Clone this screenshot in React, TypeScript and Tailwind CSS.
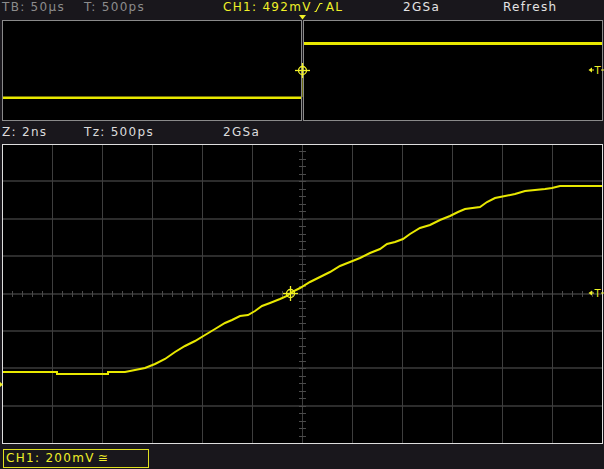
import React from "react";

const YELLOW = "#f0f028";
const TRACE = "#e8e800";

// Trace of CH1 in screen coordinates (x, y)
const wave: [number, number][] = [
  [3, 372], [57, 372], [57, 374], [108, 374], [108, 372], [125, 372], [135, 370],
  [145, 368], [155, 364], [165, 359], [175, 352], [185, 346], [195, 341], [205, 335],
  [215, 329], [225, 323], [232, 320], [240, 316], [248, 315], [255, 311], [262, 306],
  [270, 303], [280, 299], [287, 296], [292, 292], [300, 288], [310, 282], [320, 277],
  [330, 272], [340, 266], [350, 262], [360, 258], [370, 253], [380, 249], [387, 244],
  [395, 242], [403, 239], [410, 234], [420, 228], [430, 225], [440, 220], [450, 216],
  [458, 212], [465, 209], [480, 207], [487, 202], [495, 198], [505, 196], [515, 194],
  [525, 191], [535, 190], [545, 189], [552, 188], [560, 186], [602, 186],
];

function EdgeIcon() {
  return (
    <svg width="9" height="11" viewBox="0 0 9 11" className="mr-[3px] ml-[2px] mt-[2px]">
      <path d="M0.5 9.5 H2 L6 1.5 H8.5" fill="none" stroke={YELLOW} strokeWidth="1.2" />
    </svg>
  );
}

function Crosshair() {
  return (
    <svg width="17" height="17" viewBox="0 0 17 17">
      <circle cx="8.5" cy="8.5" r="4" fill="none" stroke={YELLOW} strokeWidth="1.3" />
      <line x1="8.5" y1="1" x2="8.5" y2="16" stroke={YELLOW} strokeWidth="1.3" />
      <line x1="1" y1="8.5" x2="16" y2="8.5" stroke={YELLOW} strokeWidth="1.3" />
    </svg>
  );
}

function TriggerMark() {
  return (
    <svg width="16" height="12" viewBox="0 0 16 12">
      <path d="M0.5 6 L4 3.5 V8.5 Z" fill={YELLOW} />
      <line x1="2" y1="6" x2="6" y2="6" stroke={YELLOW} strokeWidth="1" />
      <text x="6.5" y="10" fontSize="10" fill={YELLOW} fontFamily="DejaVu Sans, sans-serif">T</text>
      <line x1="13" y1="6" x2="16" y2="6" stroke={YELLOW} strokeWidth="1" />
    </svg>
  );
}

function MainGrid() {
  const hs = [1, 2, 3, 4, 5, 6, 7].map((k) => Math.round(k * 37.375));
  const vs = [1, 2, 3, 4, 5, 6, 7, 8, 9, 10, 11].map((k) => k * 50 + 0.5);
  const xTicks: number[] = [];
  for (let x = 10; x < 600; x += 10) xTicks.push(x + 0.5);
  const yTicks: number[] = [];
  for (let k = 1; k < 40; k++) yTicks.push(Math.round(k * 7.475) + 0.5);
  const pts = wave.map(([x, y]) => `${x - 2},${y - 144}`).join(" ");
  return (
    <svg width="601" height="300" viewBox="0 0 601 300" className="block">
      {hs.map((y) => (
        <line key={"h" + y} x1="1" x2="600" y1={y} y2={y} stroke="#2c2c2c" strokeWidth="2" />
      ))}
      {vs.map((x) => (
        <line key={"v" + x} x1={x} x2={x} y1="1" y2="299" stroke="#3e3e3e" strokeWidth="1" />
      ))}
      {xTicks.map((x) => (
        <line key={"xt" + x} x1={x} x2={x} y1="147" y2="153" stroke="#4a4a4a" strokeWidth="1" />
      ))}
      {yTicks.map((y) => (
        <line key={"yt" + y} x1="297" x2="304" y1={y} y2={y} stroke="#4a4a4a" strokeWidth="1" />
      ))}
      <polyline points={pts} fill="none" stroke={TRACE} strokeWidth="2" strokeLinejoin="miter" />
      <rect x="0.5" y="0.5" width="600" height="299" fill="none" stroke="#dedede" strokeWidth="1" />
    </svg>
  );
}

export default function App() {
  return (
    <div className="relative w-[604px] h-[469px] overflow-hidden bg-[#19171c] font-['DejaVu_Sans',sans-serif] text-[12px] tracking-[1.3px]">
      {/* top status line */}
      <div className="flex h-[20px] leading-[15px] whitespace-nowrap">
        <span className="w-[84px] pl-[2px] text-[#8c8c8c]">TB: 50µs</span>
        <span className="w-[139px] text-[#8c8c8c]">T: 500ps</span>
        <span className="w-[180px] flex items-start text-[#f0f028]">
          CH1: 492mV
          <EdgeIcon />
          AL
        </span>
        <span className="w-[100px] text-[#e4e4e4]">2GSa</span>
        <span className="text-[#e4e4e4]">Refresh</span>
      </div>

      {/* overview panels */}
      <div className="flex h-[101px] pl-[2px] gap-[1px]">
        <div className="w-[300px] h-full border border-[#8a8a8a] bg-black">
          <svg width="298" height="99" viewBox="0 0 298 99" className="block">
            <rect x="0" y="75.5" width="298" height="2.5" fill={TRACE} />
          </svg>
        </div>
        <div className="w-[300px] h-full border border-[#8a8a8a] bg-black">
          <svg width="298" height="99" viewBox="0 0 298 99" className="block">
            <rect x="0" y="21" width="298" height="3" fill={TRACE} />
          </svg>
        </div>
      </div>

      {/* zoom status line */}
      <div className="flex h-[23px] leading-[23px] whitespace-nowrap text-[#dcdcdc]">
        <span className="w-[84px] pl-[2px]">Z: 2ns</span>
        <span className="w-[139px]">Tz: 500ps</span>
        <span>2GSa</span>
      </div>

      {/* zoom window */}
      <div className="ml-[2px] w-[601px] h-[300px] bg-black">
        <MainGrid />
      </div>

      {/* channel label */}
      <div className="h-[25px] pl-[3px] pt-[5px]">
        <div className="w-[146px] h-[19px] border border-[#e0e020] pl-[2px] leading-[17px] text-[#f0f028] whitespace-nowrap">
          CH1: 200mV<span className="ml-[3px]">≅</span>
        </div>
      </div>

      {/* markers drawn over the panels */}
      <svg width="8" height="5" viewBox="0 0 8 5" className="absolute left-[299px] top-[15px]">
        <path d="M0 0 H7 L3.5 4.5 Z" fill={YELLOW} />
      </svg>
      <div className="absolute left-[302px] top-[77px] w-[1px] h-[20px] bg-[#6a6a10]" />
      <div className="absolute left-[294px] top-[62px]">
        <Crosshair />
      </div>
      <div className="absolute left-[588px] top-[64px]">
        <TriggerMark />
      </div>
      <div className="absolute left-[282px] top-[285px]">
        <Crosshair />
      </div>
      <div className="absolute left-[588px] top-[287px]">
        <TriggerMark />
      </div>
      <svg width="3" height="5" viewBox="0 0 3 5" className="absolute left-0 top-[382px]">
        <path d="M0 0 L3 2.5 L0 5 Z" fill={YELLOW} />
      </svg>
    </div>
  );
}
